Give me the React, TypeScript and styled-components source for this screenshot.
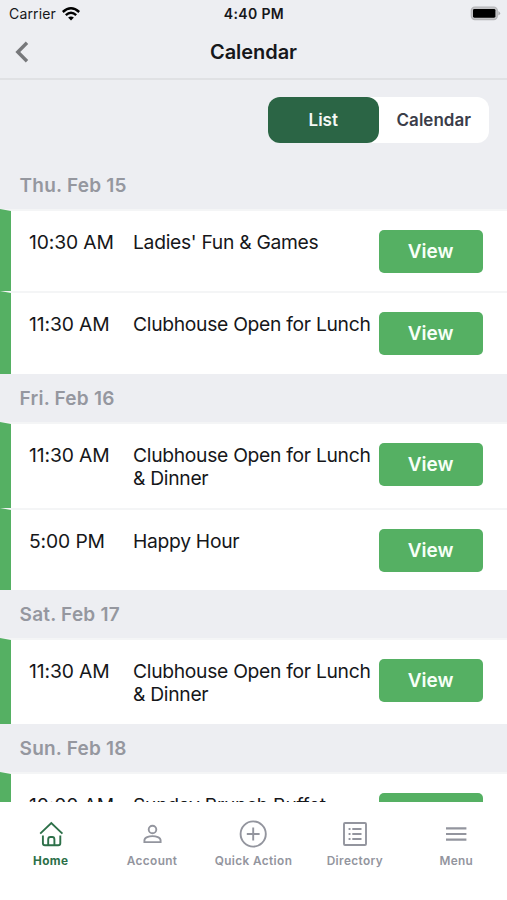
import React from "react";
import styled, { createGlobalStyle } from "styled-components";

const Global = createGlobalStyle`
  * { box-sizing: border-box; }
  body { margin: 0; background: #edeef2; font-family: Inter, "Liberation Sans", sans-serif; color: #16171a; }
  button { font-family: inherit; border: 0; padding: 0; cursor: pointer; }
`;

const Screen = styled.div`
  width: 507px;
  height: 900px;
  display: flex;
  flex-direction: column;
  overflow: hidden;
  background: #edeef2;
`;

const StatusBar = styled.div`
  height: 27px;
  flex: none;
  display: grid;
  grid-template-columns: 1fr auto 1fr;
  align-items: center;
  padding: 0 6px 0 9px;
  font-size: 14px;
  line-height: 27px;
`;

const Carrier = styled.div`
  display: flex;
  align-items: center;
  gap: 6px;
  letter-spacing: 0.15px;
`;

const Clock = styled.div`
  font-weight: 600;
  letter-spacing: 0.35px;
  margin-left: -2px;
`;

const Battery = styled.svg`
  justify-self: end;
`;

const NavBar = styled.header`
  height: 53px;
  flex: none;
  display: grid;
  grid-template-columns: 60px 1fr 60px;
  align-items: center;
  border-bottom: 2px solid #e0e1e4;
`;

const Back = styled.button`
  background: none;
  display: flex;
  padding-left: 14px;
  margin-top: -1px;
`;

const Title = styled.h1`
  margin: -1px 0 0;
  text-align: center;
  font-size: 20px;
  line-height: 50px;
  font-weight: 600;
  letter-spacing: -0.05px;
`;

const Toolbar = styled.div`
  flex: none;
  display: flex;
  justify-content: flex-end;
  padding: 17px 18px 19px 0;
`;

const Segmented = styled.div`
  display: flex;
  width: 221px;
  height: 46px;
  border-radius: 12px;
  background: #fff;
`;

const Segment = styled.button<{ $active?: boolean }>`
  flex: 1;
  border-radius: 12px;
  font-size: 17px;
  font-weight: 600;
  background: ${(p) => (p.$active ? "#2b6545" : "transparent")};
  color: ${(p) => (p.$active ? "#f4f8f5" : "#3b3d49")};
`;

const List = styled.main`
  flex: 1;
  min-height: 0;
  overflow: hidden;
`;

const DayHeading = styled.h2`
  margin: 0;
  height: 48px;
  padding-left: 19.6px;
  font-size: 19px;
  line-height: 49px;
  font-weight: 600;
  letter-spacing: 0.22px;
  color: #95979f;

  section:first-child > & {
    height: 47px;
    line-height: 48px;
  }
`;

const EventRow = styled.div<{ $h: number }>`
  height: ${(p) => p.$h}px;
  display: grid;
  grid-template-columns: 104px 245.5px 104px;
  align-items: start;
  padding: 19px 0 0 18px;
  background: #fff;
  border-top: 2px solid #f4f5f6;
  border-left: 11px solid #55b063;
`;

const EventText = styled.div<{ $tight?: boolean }>`
  padding-top: 0.5px;
  font-size: 19.3px;
  line-height: 23px;
  letter-spacing: ${(p) => (p.$tight ? "-0.3px" : "-0.12px")};
  white-space: pre;
`;

const ViewButton = styled.button`
  height: 43px;
  border-radius: 5px;
  background: #55b063;
  color: #f7fff8;
  font-size: 19px;
  font-weight: 600;
`;

const TabBar = styled.nav`
  height: 98px;
  flex: none;
  display: grid;
  grid-template-columns: repeat(5, 1fr);
  background: #fff;
`;

const Tab = styled.button<{ $active?: boolean }>`
  background: none;
  display: flex;
  flex-direction: column;
  align-items: center;
  padding-top: 16px;
  gap: 3px;
  font-size: 11.8px;
  line-height: 16px;
  font-weight: ${(p) => (p.$active ? 700 : 600)};
  letter-spacing: 0.38px;
  white-space: nowrap;
  color: ${(p) => (p.$active ? "#2d7049" : "#93959e")};
`;

const TabIcon = styled.svg`
  width: 32px;
  height: 32px;
  fill: none;
  stroke: currentColor;
  stroke-width: 1.9;
`;

const days = [
  { day: "Thu. Feb 15", events: [
    { time: "10:30 AM", name: "Ladies' Fun & Games", h: 82 },
    { time: "11:30 AM", name: "Clubhouse Open for Lunch", h: 83 },
  ] },
  { day: "Fri. Feb 16", events: [
    { time: "11:30 AM", name: "Clubhouse Open for Lunch\n& Dinner", h: 86 },
    { time: "5:00 PM", name: "Happy Hour", h: 82 },
  ] },
  { day: "Sat. Feb 17", events: [
    { time: "11:30 AM", name: "Clubhouse Open for Lunch\n& Dinner", h: 86 },
  ] },
  { day: "Sun. Feb 18", events: [
    { time: "10:00 AM", name: "Sunday Brunch Buffet", h: 86 },
  ] },
];

const tabs = [
  { label: "Home", icon: (
    <>
      <path d="M5.2 15.6 16.3 5.1l11.1 10.5" />
      <path d="M7.9 17.6v7.6q0 2 2 2h13.4q2 0 2-2v-7.6" />
      <path d="M13.2 27.2v-5.8q0-2.4 2.2-2.4h1.8q2.2 0 2.2 2.4v5.8" />
    </>
  ) },
  { label: "Account", icon: (
    <>
      <circle cx="16.5" cy="11.5" r="3.8" />
      <path d="M8.4 24.1v-1.6c0-3 4.6-4.4 8.1-4.4s8.1 1.4 8.1 4.4v1.6z" />
    </>
  ) },
  { label: "Quick Action", icon: (
    <>
      <circle cx="16.2" cy="16" r="12.6" />
      <path d="M16.2 9.6v12.8M9.8 16h12.8" />
    </>
  ) },
  { label: "Directory", icon: (
    <>
      <rect x="5" y="5" width="22" height="22" rx="1" />
      <path d="M13.3 11h9.2M13.3 16h9.2M13.3 21h9.2M9.6 11h1.9M9.6 16h1.9M9.6 21h1.9" />
    </>
  ) },
  { label: "Menu", icon: <path strokeWidth="2.2" d="M6 10.4h20.4M6 16h20.4M6 21.6h20.4" /> },
];

export default function App() {
  return (
    <Screen>
      <Global />
      <StatusBar>
        <Carrier>
          Carrier
          <svg width="18" height="14" viewBox="0 0 18 14" fill="none" stroke="#000" strokeWidth="2.4">
            <path d="M.8 5Q9-2.4 17.2 5M3.8 8.1q5.2-4.7 10.4 0" />
            <path d="M9 13.5 6.1 10.6q2.9-2.4 5.8 0z" fill="#000" stroke="none" />
          </svg>
        </Carrier>
        <Clock>4:40 PM</Clock>
        <Battery width="31" height="16" viewBox="0 0 31 16">
          <rect x="1.3" y="1" width="26" height="12.6" rx="3.6" fill="#c4c4c7" stroke="#b4b4b7" strokeWidth="1.2" />
          <rect x="3" y="2.9" width="22.4" height="8.8" rx="1.4" fill="#000" />
          <path d="M28.4 5q3.4 2.3 0 4.6z" fill="#aaaaad" />
        </Battery>
      </StatusBar>
      <NavBar>
        <Back aria-label="Back">
          <svg width="16" height="22" viewBox="0 0 16 22" fill="none" stroke="#77787b" strokeWidth="3.4">
            <path d="M13 1.8 3.8 11l9.2 9.2" />
          </svg>
        </Back>
        <Title>Calendar</Title>
      </NavBar>
      <Toolbar>
        <Segmented>
          <Segment $active>List</Segment>
          <Segment>Calendar</Segment>
        </Segmented>
      </Toolbar>
      <List>
        {days.map((d) => (
          <section key={d.day}>
            <DayHeading>{d.day}</DayHeading>
            {d.events.map((e) => (
              <EventRow key={e.time} $h={e.h}>
                <EventText>{e.time}</EventText>
                <EventText $tight>{e.name}</EventText>
                <ViewButton>View</ViewButton>
              </EventRow>
            ))}
          </section>
        ))}
      </List>
      <TabBar>
        {tabs.map((t, i) => (
          <Tab key={t.label} $active={i === 0}>
            <TabIcon viewBox="0 0 32 32">{t.icon}</TabIcon>
            {t.label}
          </Tab>
        ))}
      </TabBar>
    </Screen>
  );
}
